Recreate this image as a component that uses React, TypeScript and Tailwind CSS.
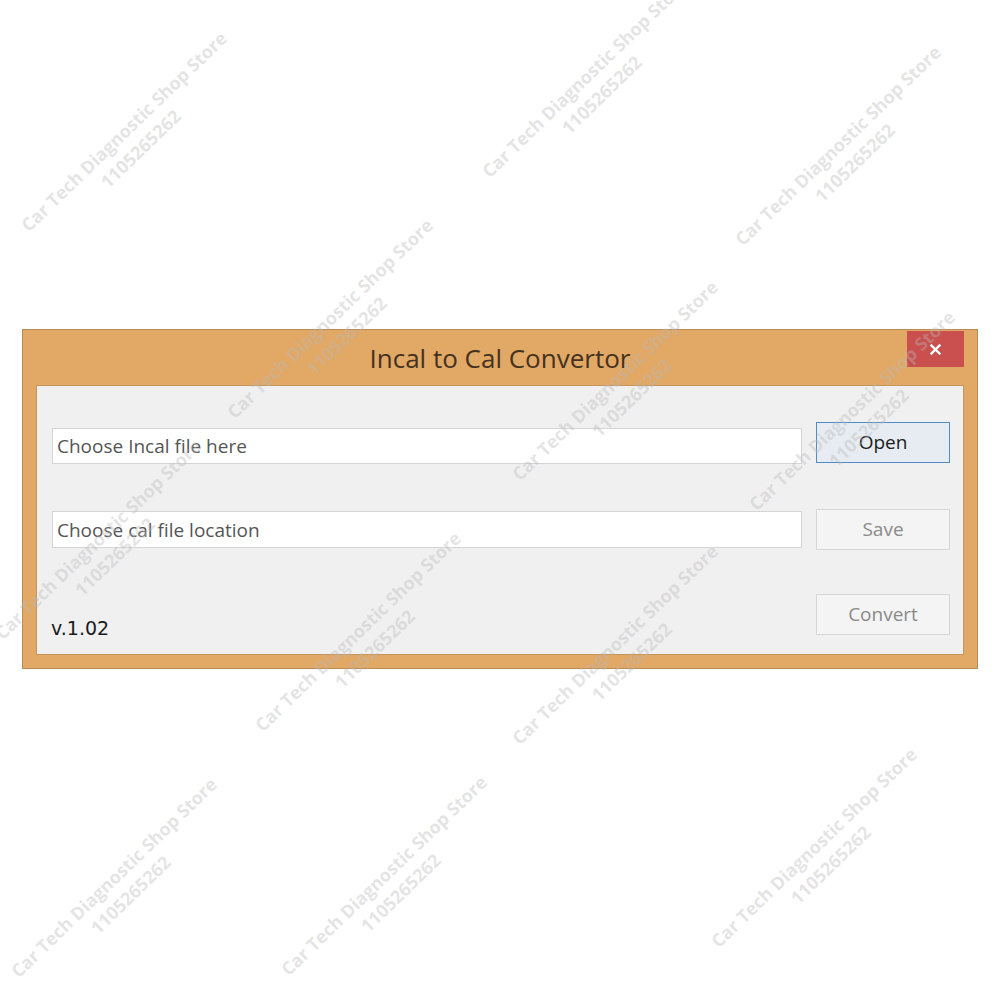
import React from "react";

const marks: { x: number; y: number }[] = [
  { x: 132, y: 140 },
  { x: 593, y: 86 },
  { x: 846, y: 154 },
  { x: 338, y: 327 },
  { x: 623, y: 389 },
  { x: 860, y: 419 },
  { x: 106, y: 548 },
  { x: 366, y: 640 },
  { x: 623, y: 653 },
  { x: 122, y: 886 },
  { x: 392, y: 884 },
  { x: 822, y: 856 },
];

const Watermark = ({ x, y }: { x: number; y: number }) => (
  <div
    className="absolute -translate-x-1/2 -translate-y-1/2 rotate-[-44deg] whitespace-nowrap text-center font-bold text-[18px] leading-[24px] text-[rgba(185,185,185,0.38)] pointer-events-none select-none"
    style={{ left: x, top: y }}
  >
    <div>Car Tech Diagnostic Shop Store</div>
    <div>1105265262</div>
  </div>
);

export default function App() {
  return (
    <div className="relative w-[1000px] h-[1000px] overflow-hidden bg-white pt-[329px] pl-[22px] font-['Open_Sans',sans-serif]">
      {/* window */}
      <div className="relative w-[956px] h-[340px] border border-[#b88b57] bg-[#e1a866] px-[13px] pb-[13px] flex flex-col">
        <div className="h-[55px] shrink-0 flex items-center justify-center">
          <span className="text-[26px] leading-[36px] text-[#45321e]">Incal to Cal Convertor</span>
        </div>
        <button className="absolute top-px right-[13px] w-[57px] h-[36px] bg-[#c9504e] flex items-center justify-center">
          <svg width="11" height="11" viewBox="0 0 11 11">
            <path d="M1.5 1.5L9.5 9.5M9.5 1.5L1.5 9.5" stroke="#fff" strokeWidth="2.4" strokeLinecap="square" />
          </svg>
        </button>

        {/* client area */}
        <div className="flex-1 border border-[#c4955d] bg-[#f0f0f0] pt-[36px] pl-[15px] pr-[13px]">
          <div className="flex items-start">
            <input
              readOnly
              value="Choose Incal file here"
              className="mt-[6px] w-[750px] h-[36px] border border-[#d5d5d5] bg-white pl-[4px] text-[19px] text-[#555555] outline-none"
            />
            <button className="ml-[14px] w-[134px] h-[41px] border border-[#4f8cc3] bg-[#e6ecf2] text-[19px] text-[#1b1b1b]">
              Open
            </button>
          </div>

          <div className="flex items-start mt-[45px]">
            <input
              readOnly
              value="Choose cal file location"
              className="mt-[2px] w-[750px] h-[37px] border border-[#d5d5d5] bg-white pl-[4px] text-[19px] text-[#555555] outline-none"
            />
            <button className="ml-[14px] w-[134px] h-[41px] border border-[#d6d6d6] bg-[#f4f4f4] text-[19px] text-[#8a8a8a]">
              Save
            </button>
          </div>

          <div className="flex items-start justify-between mt-[44px]">
            <span className="-ml-px mt-[22px] font-['DejaVu_Sans',sans-serif] text-[19px] leading-[24px] text-[#1a1a1a]">
              v.1.02
            </span>
            <button className="w-[134px] h-[41px] border border-[#d6d6d6] bg-[#f4f4f4] text-[19px] text-[#8a8a8a]">
              Convert
            </button>
          </div>
        </div>
      </div>

      {marks.map((m, i) => (
        <Watermark key={i} x={m.x} y={m.y} />
      ))}
    </div>
  );
}
